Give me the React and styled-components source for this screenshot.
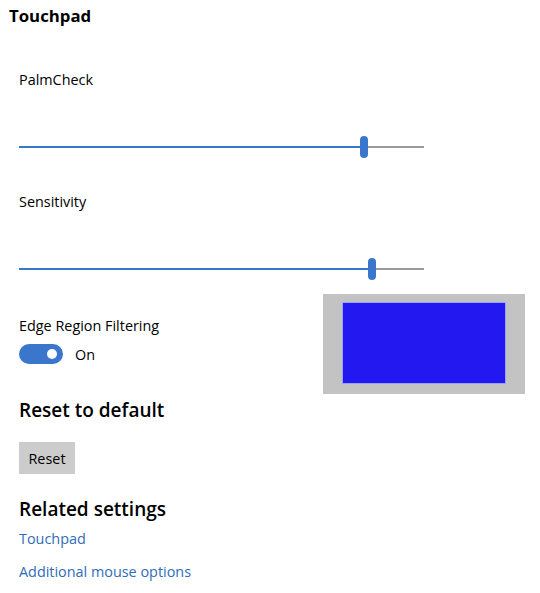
import React from "react";
import styled, { createGlobalStyle } from "styled-components";

const GlobalStyle = createGlobalStyle`
  html, body {
    margin: 0;
    padding: 0;
    background: #ffffff;
  }
  body {
    font-family: "Open Sans", "Noto Sans", sans-serif;
    color: #000;
  }
`;

const Page = styled.div`
  width: 540px;
  height: 593px;
  overflow: hidden;
  padding: 5px 0 0 9px;
  box-sizing: border-box;
`;

const Title = styled.h1`
  margin: 0;
  font-size: 16.8px;
  line-height: 22px;
  font-weight: 700;
`;

const Content = styled.div`
  padding-left: 10px;
`;

const Label = styled.div`
  font-size: 14.4px;
  line-height: 20px;
  margin-top: ${(p) => p.$top || 0}px;
`;

const SliderWrap = styled.div`
  position: relative;
  width: 405px;
  height: 32px;
  margin-top: ${(p) => p.$top || 0}px;
`;

const Track = styled.div`
  position: absolute;
  left: 0;
  right: 0;
  top: 15px;
  height: 2px;
  background: linear-gradient(
    to right,
    #3a76cc 0,
    #3a76cc ${(p) => p.$value}%,
    #9a9a9a ${(p) => p.$value}%,
    #9a9a9a 100%
  );
`;

const Thumb = styled.div`
  position: absolute;
  top: 5px;
  width: 8px;
  height: 22px;
  margin-left: -4px;
  border-radius: 4px;
  background: #3a76cc;
`;

const Slider = ({ value, top }) => (
  <SliderWrap $top={top}>
    <Track $value={value} />
    <Thumb style={{ left: `${value}%` }} />
  </SliderWrap>
);

const EdgeRow = styled.div`
  display: flex;
  margin-top: ${(p) => p.$top || 0}px;
  height: 100px;
`;

const EdgeLeft = styled.div`
  width: 304px;
  padding-top: 22px;
  box-sizing: border-box;
`;

const ToggleRow = styled.div`
  display: flex;
  align-items: center;
  gap: 12px;
  margin-top: 8px;
  font-size: 14.4px;
`;

const Toggle = styled.div`
  position: relative;
  width: 44px;
  height: 20px;
  border-radius: 10px;
  background: #3a76cc;

  &::after {
    content: "";
    position: absolute;
    right: 6px;
    top: 5px;
    width: 10px;
    height: 10px;
    border-radius: 50%;
    background: #fff;
  }
`;

const Preview = styled.div`
  width: 202px;
  height: 100px;
  background: #c3c3c3;
  display: flex;
  align-items: center;
  justify-content: center;
`;

const PreviewInner = styled.div`
  width: 162px;
  height: 80px;
  background: #2318ef;
  border: 1px solid #9aa0ff;
  margin-left: -1px;
  margin-top: -2px;
`;

const SectionTitle = styled.h2`
  margin: ${(p) => p.$top || 0}px 0 0;
  font-size: 19px;
  line-height: 24px;
  font-weight: 600;
`;

const Button = styled.button`
  display: block;
  margin-top: 20px;
  width: 56px;
  height: 32px;
  padding: 0;
  border: none;
  background: #cccccc;
  font-family: inherit;
  font-size: 14.4px;
  color: #000;
`;

const Link = styled.a`
  display: block;
  font-size: 14.4px;
  line-height: 20px;
  color: #2f6db8;
  text-decoration: none;
  margin-top: ${(p) => p.$top || 0}px;
`;

export default function App() {
  return (
    <>
      <GlobalStyle />
      <Page>
        <Title>Touchpad</Title>
        <Content>
          <Label $top={43}>PalmCheck</Label>
          <Slider value={85.2} top={41} />
          <Label $top={29}>Sensitivity</Label>
          <Slider value={87.2} top={41} />
          <EdgeRow $top={9}>
            <EdgeLeft>
              <Label>Edge Region Filtering</Label>
              <ToggleRow>
                <Toggle />
                <span>On</span>
              </ToggleRow>
            </EdgeLeft>
            <Preview>
              <PreviewInner />
            </Preview>
          </EdgeRow>
          <SectionTitle $top={4}>Reset to default</SectionTitle>
          <Button>Reset</Button>
          <SectionTitle $top={23}>Related settings</SectionTitle>
          <Link href="#" $top={8}>Touchpad</Link>
          <Link href="#" $top={13}>Additional mouse options</Link>
        </Content>
      </Page>
    </>
  );
}
